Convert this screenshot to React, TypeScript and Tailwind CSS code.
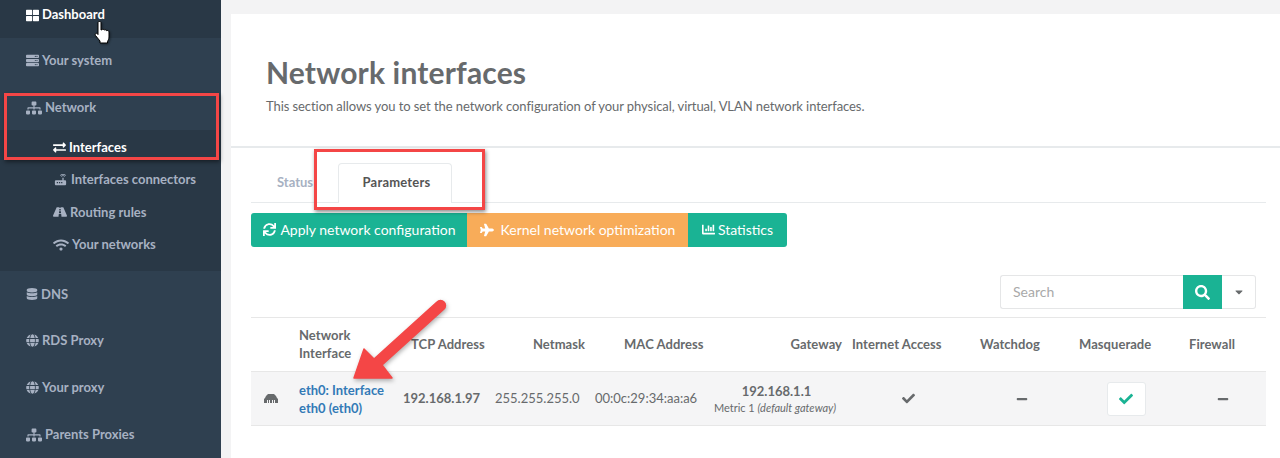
import React from 'react';
import {
  FaThLarge, FaServer, FaSitemap, FaExchangeAlt, FaRoad, FaWifi, FaDatabase, FaGlobe,
  FaSync, FaPlane, FaChartBar, FaSearch, FaCaretDown, FaCheck, FaMinus,
} from 'react-icons/fa';
import { MdRouter } from 'react-icons/md';

const Item = ({ icon, label, active, h = 'h-[46.5px]' }: { icon: React.ReactNode; label: string; active?: boolean; h?: string }) => (
  <div className={`flex items-center gap-[3px] pl-[26px] font-bold text-[13px] ${h} ${active ? 'text-white' : 'text-[#a7b1c2]'}`}>
    {icon}
    <span>{label}</span>
  </div>
);

const SubItem = ({ icon, label, active }: { icon: React.ReactNode; label: string; active?: boolean }) => (
  <div className={`flex items-center gap-[3px] pl-[53px] h-[32.5px] font-bold text-[13px] ${active ? 'text-white' : 'text-[#a7b1c2]'}`}>
    {icon}
    <span>{label}</span>
  </div>
);

const Sidebar = () => (
  <aside className="w-[221px] shrink-0 bg-[#2f4050] h-[458px] overflow-hidden">
    <div className="bg-[#293846] h-[38px]">
      <Item active icon={<FaThLarge size={13} />} label="Dashboard" h="h-[30px]" />
    </div>
    <Item icon={<FaServer size={13} />} label="Your system" h="h-[45px]" />
    <Item icon={<FaSitemap size={16} />} label="Network" h="h-[47px] pt-[2px]" />
    <div className="bg-[#293846] h-[141px] pt-[1px]">
      <SubItem active icon={<FaExchangeAlt size={13} />} label="Interfaces" />
      <SubItem icon={<MdRouter size={15} />} label="Interfaces connectors" />
      <SubItem icon={<FaRoad size={14} />} label="Routing rules" />
      <SubItem icon={<FaWifi size={16} />} label="Your networks" />
    </div>
    <Item icon={<FaDatabase size={12} />} label="DNS" />
    <Item icon={<FaGlobe size={13} />} label="RDS Proxy" />
    <Item icon={<FaGlobe size={13} />} label="Your proxy" />
    <Item icon={<FaSitemap size={16} />} label="Parents Proxies" h="h-[46.5px] pt-[2px]" />
  </aside>
);

const PortIcon = () => (
  <svg width="14" height="9" viewBox="0 0 14 9" fill="#676a6c">
    <path d="M4 0h6l2 2 1 2 1 1v4H0V5l1-1 1-2z" />
    <path d="M3 6h1v3H3zM5 6h1v3H5zM8 6h1v3H8zM10 6h1v3h-1z" fill="#f5f5f6" />
  </svg>
);

const gridCols = 'grid grid-cols-[40px_112px_92px_100px_113px_137px_126px_102px_106px_87px]';

const Table = () => (
  <div className="text-[13px] text-[#676a6c]">
    <div className={`${gridCols} h-[55px] pb-[2px] items-center border-t border-[#e7e7e7] font-bold leading-[18px] tracking-[0.05px]`}>
      <div />
      <div className="pl-2">Network<br />Interface</div>
      <div className="pl-2">TCP Address</div>
      <div className="text-right pr-[10px]">Netmask</div>
      <div className="pl-[29px]">MAC Address</div>
      <div className="text-right pr-[3px]">Gateway</div>
      <div className="pl-[7px]">Internet Access</div>
      <div className="pl-[9px]">Watchdog</div>
      <div className="pl-[6px]">Masquerade</div>
      <div className="pl-[10px]">Firewall</div>
    </div>
    <div className={`${gridCols} h-[55px] -mt-px items-center border-y border-[#e7e7e7] bg-[#f5f5f6]`}>
      <div className="flex justify-center"><PortIcon /></div>
      <div className="pl-2 text-[#337ab7] font-bold leading-[18px]">eth0: Interface<br />eth0 (eth0)</div>
      <div className="font-bold">192.168.1.97</div>
      <div>255.255.255.0</div>
      <div>00:0c:29:34:aa:a6</div>
      <div className="text-center">
        <div className="font-bold leading-[18px]">192.168.1.1</div>
        <div className="text-[11px] leading-[16px] -ml-[3px]">Metric 1 <i>(default gateway)</i></div>
      </div>
      <div className="flex justify-center"><FaCheck size={13} /></div>
      <div className="flex justify-center"><FaMinus size={12} /></div>
      <div className="flex justify-center">
        <div className="w-[39px] h-[34px] bg-white border border-[#e7eaec] rounded-[3px] flex items-center justify-center">
          <FaCheck size={14} className="text-[#1ab394]" />
        </div>
      </div>
      <div className="flex justify-center"><FaMinus size={12} /></div>
    </div>
  </div>
);

const Content = () => (
  <main className="flex-1 min-w-0 pl-[10px] pt-[14px] bg-[#f3f3f4] h-[458px] overflow-hidden">
    <div className="bg-white h-full">
      <header className="h-[134px] pl-[35px] pt-[38px] border-b-2 border-[#e7eaec] text-[#676a6c]">
        <h1 className="text-[30px] font-bold leading-[40px] tracking-[0.17px]">Network interfaces</h1>
        <p className="text-[13px] leading-[18px] mt-[5px] tracking-[-0.075px]">
          This section allows you to set the network configuration of your physical, virtual, VLAN network interfaces.
        </p>
      </header>
      <div className="pl-[20px] pr-[14px] pt-[15px]">
        <div className="flex h-[40px] border-b border-[#e7eaec] text-[13px] font-bold">
          <div className="pl-[26px] w-[87px] flex items-center text-[#a7b1c2]">Status</div>
          <div className="w-[114px] h-[40px] pl-[3px] pb-[2px] bg-white border border-b-0 border-[#e7eaec] rounded-t-[4px] flex items-center justify-center text-[#555] tracking-[0.2px]">
            Parameters
          </div>
        </div>
        <div className="flex h-[34px] mt-[10px] text-[14px] text-white leading-[32px]">
          <div className="w-[216px] bg-[#1ab394] rounded-l-[3px] flex items-start pt-px pl-[1px] justify-center gap-[4px]">
            <FaSync size={13} className="mt-[9px]" />Apply network configuration
          </div>
          <div className="w-[221px] bg-[#f8ac59] flex items-start pt-px justify-center gap-[7px]">
            <FaPlane size={14} className="mt-[9px]" />Kernel network optimization
          </div>
          <div className="w-[99px] bg-[#1ab394] rounded-r-[3px] flex items-start pt-px justify-center gap-[3px]">
            <FaChartBar size={13} className="mt-[9px]" />Statistics
          </div>
        </div>
        <div className="flex justify-end h-[34px] mt-[28px] pr-[10px] text-[14px]">
          <div className="w-[183px] border border-[#e5e6e7] border-r-0 rounded-l-[3px] pl-[12px] pb-[2px] flex items-center text-[#a9a9a9]">
            Search
          </div>
          <div className="w-[39px] bg-[#1ab394] text-white flex items-center justify-center">
            <FaSearch size={15} />
          </div>
          <div className="w-[34px] border border-[#e5e6e7] border-l-0 rounded-r-[3px] flex items-center justify-center text-[#676a6c]">
            <FaCaretDown size={12} />
          </div>
        </div>
        <div className="mt-[8px]"><Table /></div>
      </div>
    </div>
  </main>
);

// screenshot annotations, drawn on top of the page
const Annotations = () => (
  <>
    <div className="absolute left-[4px] top-[93px] w-[215px] h-[67px] border-[3px] border-[#f44646] shadow-[1px_2px_4px_rgba(0,0,0,0.45)]" />
    <div className="absolute left-[314px] top-[149px] w-[171px] h-[61px] border-[3px] border-[#f44646] shadow-[1px_2px_4px_rgba(0,0,0,0.45)]" />
    <svg className="absolute left-0 top-0 pointer-events-none" width="1280" height="458" viewBox="0 0 1280 458">
      <g style={{ filter: 'drop-shadow(1px 2px 2px rgba(0,0,0,0.3))' }}>
        <path d="M354 378l10-29 10 10 63-57a4.500 4.500 0 0 1 7 7l-62 56 10 13z" fill="#f44646" stroke="#f44646" strokeWidth="1.500" strokeLinejoin="round" />
      </g>
      <g transform="translate(93 21)" style={{ filter: 'drop-shadow(1px 1px 1px rgba(0,0,0,0.4))' }}>
        <path
          d="M5 1.500a1.600 1.600 0 0 1 3 0V9l1-.3c.4-.5 2-.5 2.300.4.600-.6 2-.4 2.300.6.700-.5 2.200-.2 2.400 1V16c0 2-.8 3-1.500 4.500v1.500H7v-2L2.500 14.500c-1-1.500.6-3 2-1.700L5 13.500z"
          fill="#fff"
          stroke="#000"
          strokeWidth="1"
          strokeLinejoin="round"
        />
      </g>
    </svg>
  </>
);

export default function App() {
  return (
    <div className="relative flex w-[1280px] h-[458px] overflow-hidden font-['Lato','Open_Sans',sans-serif]">
      <Sidebar />
      <Content />
      <Annotations />
    </div>
  );
}
